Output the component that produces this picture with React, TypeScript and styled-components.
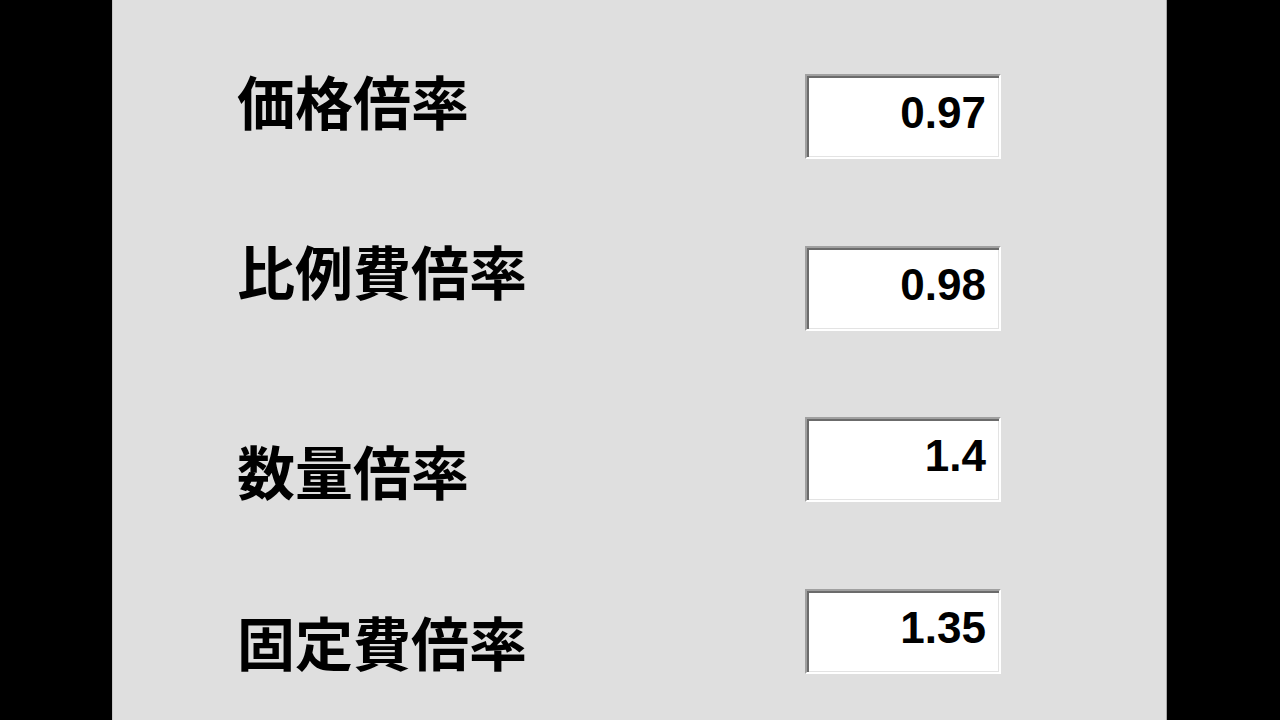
import React from 'react';
import styled, { createGlobalStyle } from 'styled-components';

type Rate = {
  label: string;
  value: string;
  shift: number;
};

const rates: Rate[] = [
  { label: '価格倍率', value: '0.97', shift: -3 },
  { label: '比例費倍率', value: '0.98', shift: -5 },
  { label: '数量倍率', value: '1.4', shift: 24 },
  { label: '固定費倍率', value: '1.35', shift: 23 },
];

const App = (): React.ReactElement => (
  <Screen>
    <GlobalStyle />
    <Panel>
      <RateList>
        {rates.map((rate) => (
          <RateRow key={rate.label}>
            <RateLabel shift={rate.shift}>{rate.label}</RateLabel>
            <ValueBox>{rate.value}</ValueBox>
          </RateRow>
        ))}
      </RateList>
    </Panel>
  </Screen>
);

const GlobalStyle = createGlobalStyle`
  html, body {
    margin: 0;
    padding: 0;
    background: #000;
  }
`;

const Screen = styled.div`
  width: 1280px;
  height: 720px;
  display: flex;
  padding-left: 112px;
  box-sizing: border-box;
  background: #000;
  overflow: hidden;
`;

const Panel = styled.div`
  width: 1055px;
  height: 720px;
  box-sizing: border-box;
  background: #dfdfdf;
  border-left: 1px solid #c8c8c8;
  border-right: 1px solid #a8a8a8;
  padding: 74px 0 0 124px;
`;

const RateList = styled.div`
  display: grid;
  grid-template-rows: 172px 171px 172px 171px;
`;

const RateRow = styled.div`
  display: grid;
  grid-template-columns: 568px 196px;
  align-items: start;
`;

const RateLabel = styled.div<{ shift: number }>`
  margin-top: ${({ shift }) => shift}px;
  font-family: 'Noto Sans CJK JP', sans-serif;
  font-weight: 700;
  font-size: 58px;
  line-height: 58px;
  color: #000;
  white-space: nowrap;
`;

const ValueBox = styled.div`
  width: 196px;
  height: 85px;
  box-sizing: border-box;
  background: #fff;
  border: 2px solid;
  border-color: #a0a0a0 #ffffff #ffffff #a0a0a0;
  box-shadow: inset 2px 2px 0 #6b6b6b, inset -1px -1px 0 #e3e3e3;
  padding: 15px 13px 0 0;
  text-align: right;
  font-family: 'Liberation Sans', Arial, sans-serif;
  font-weight: 700;
  font-size: 44px;
  line-height: 1;
  color: #000;
`;

export default App;
